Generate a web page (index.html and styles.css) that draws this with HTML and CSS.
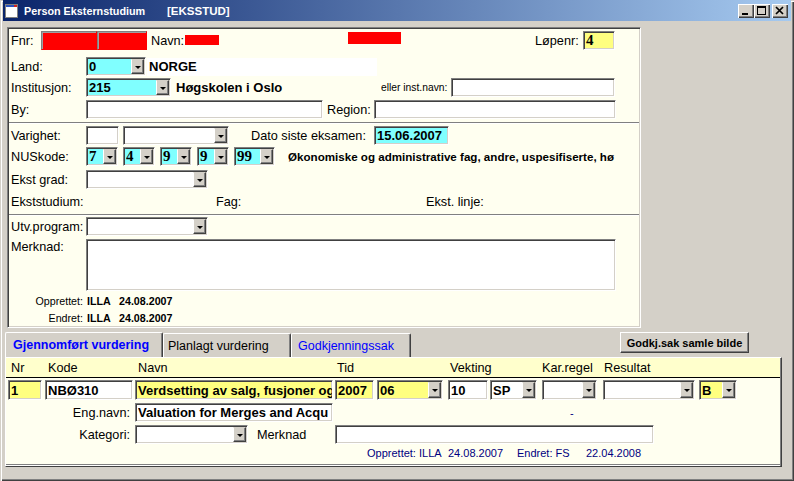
FILE: index.html
```html
<!DOCTYPE html>
<html>
<head>
<meta charset="utf-8">
<title>Person Eksternstudium</title>
<link rel="stylesheet" href="styles.css">
</head>
<body>
<div class="win">
  <div class="titlebar">
    <svg class="ticon" width="14" height="14" viewBox="0 0 14 14"><rect x="0.5" y="0.5" width="12" height="13" fill="#fff" stroke="#808080"/><rect x="1" y="1" width="11" height="2" fill="#2a52be"/><rect x="9" y="1" width="3" height="2" fill="#d02020"/></svg>
    <span class="ttext">Person Eksternstudium</span><span class="tcode">[EKSSTUD]</span>
    <div class="tbtns">
      <div class="tbtn"><svg width="16" height="14" viewBox="0 0 16 14"><rect x="4" y="9" width="6" height="2" fill="#000"/></svg></div>
      <div class="tbtn"><svg width="16" height="14" viewBox="0 0 16 14"><rect x="3.5" y="2.5" width="8" height="8" fill="none" stroke="#000"/><rect x="3" y="2" width="9" height="2" fill="#000"/></svg></div>
      <div class="tbtn close"><svg width="16" height="14" viewBox="0 0 16 14"><path d="M4 3 L11 10 M11 3 L4 10" stroke="#000" stroke-width="1.7"/></svg></div>
    </div>
  </div>

  <div class="top">
    <div class="row r1">
      <span class="lbl fnr">Fnr:</span>
      <div class="fld red w56"></div>
      <div class="fld red w50"></div>
      <span class="lbl navn">Navn:</span>
      <div class="redbar rb1"></div>
      <div class="redbar rb2"></div>
      <span class="lbl lopenr">Løpenr:</span>
      <div class="fld yel serif w32">4</div>
    </div>
    <div class="row r2">
      <span class="lbl lw">Land:</span>
      <div class="fld combo cyan w60"><span class="val">0</span><span class="dd"></span></div>
      <div class="plain w230">NORGE</div>
    </div>
    <div class="row r3">
      <span class="lbl lw">Institusjon:</span>
      <div class="fld combo cyan w85"><span class="val">215</span><span class="dd"></span></div>
      <span class="boldtxt inst">Høgskolen i Oslo</span>
      <span class="small instlbl">eller inst.navn:</span>
      <div class="fld w164"></div>
    </div>
    <div class="row r4">
      <span class="lbl lw">By:</span>
      <div class="fld w237"></div>
      <span class="lbl region">Region:</span>
      <div class="fld w242"></div>
    </div>
    <div class="divider d1"></div>
    <div class="row r5">
      <span class="lbl lw">Varighet:</span>
      <div class="fld w33"></div>
      <div class="fld combo w106 ml4"><span class="val"></span><span class="dd"></span></div>
      <span class="lbl dato">Dato siste eksamen:</span>
      <div class="fld cyan w75">15.06.2007</div>
    </div>
    <div class="row r6">
      <span class="lbl lw">NUSkode:</span>
      <div class="fld combo cyan serif w32"><span class="val">7</span><span class="dd"></span></div>
      <div class="fld combo cyan serif w32 ml5"><span class="val">4</span><span class="dd"></span></div>
      <div class="fld combo cyan serif w32 ml5"><span class="val">9</span><span class="dd"></span></div>
      <div class="fld combo cyan serif w32 ml5"><span class="val">9</span><span class="dd"></span></div>
      <div class="fld combo cyan serif w41 ml5"><span class="val">99</span><span class="dd"></span></div>
      <span class="nustxt">Økonomiske og administrative fag, andre, uspesifiserte, hø</span>
    </div>
    <div class="row r7">
      <span class="lbl lw">Ekst grad:</span>
      <div class="fld combo w122"><span class="val"></span><span class="dd"></span></div>
    </div>
    <div class="row r8">
      <span class="lbl eks">Ekststudium:</span>
      <span class="lbl fag">Fag:</span>
      <span class="lbl">Ekst. linje:</span>
    </div>
    <div class="divider d2"></div>
    <div class="row r9">
      <span class="lbl lw">Utv.program:</span>
      <div class="fld combo w122"><span class="val"></span><span class="dd"></span></div>
    </div>
    <div class="row merk">
      <span class="lbl lw mlbl">Merknad:</span>
      <div class="fld area"></div>
    </div>
    <div class="row meta m1">
      <span class="metalbl">Opprettet:</span>
      <span class="metaval who">ILLA</span>
      <span class="metaval">24.08.2007</span>
    </div>
    <div class="row meta m2">
      <span class="metalbl">Endret:</span>
      <span class="metaval who">ILLA</span>
      <span class="metaval">24.08.2007</span>
    </div>
  </div>

  <div class="tabs">
    <div class="tab sel t1">Gjennomført vurdering</div>
    <div class="tab t2">Planlagt vurdering</div>
    <div class="tab t3">Godkjenningssak</div>
    <div class="gbtn">Godkj.sak samle bilde</div>
  </div>

  <div class="grid">
    <div class="gridin">
      <div class="ghead">
        <span class="h-nr">Nr</span>
        <span class="h-kode">Kode</span>
        <span class="h-navn">Navn</span>
        <span class="h-tid">Tid</span>
        <span class="h-vekt">Vekting</span>
        <span class="h-kar">Kar.regel</span>
        <span>Resultat</span>
      </div>
      <div class="grow g1">
        <div class="fld yel w34 h20">1</div>
        <div class="fld w88 h20 ml3">NBØ310</div>
        <div class="fld yel w198 h20 ml2"><span class="clip">Verdsetting av salg, fusjoner og</span></div>
        <div class="fld yel w39 h20 ml2">2007</div>
        <div class="fld combo yel w66 h20 ml3"><span class="val">06</span><span class="dd"></span></div>
        <div class="fld w40 h20 ml5">10</div>
        <div class="fld combo w47 h20 ml2"><span class="val">SP</span><span class="dd"></span></div>
        <div class="fld combo w55 h20 ml5"><span class="val"></span><span class="dd"></span></div>
        <div class="fld combo w92 h20 ml6"><span class="val"></span><span class="dd"></span></div>
        <div class="fld combo yel w38 h20 ml4"><span class="val">B</span><span class="dd"></span></div>
      </div>
      <div class="grow g2">
        <span class="glbl">Eng.navn:</span>
        <div class="fld w198"><span class="clip">Valuation for Merges and Acqu</span></div>
        <span class="dash">-</span>
      </div>
      <div class="grow g3">
        <span class="glbl">Kategori:</span>
        <div class="fld combo w113"><span class="val"></span><span class="dd"></span></div>
        <span class="gmerk">Merknad</span>
        <div class="fld w319"></div>
      </div>
      <div class="grow g4">
        <span class="bl b1">Opprettet: ILLA</span>
        <span class="bl b2">24.08.2007</span>
        <span class="bl b3">Endret: FS</span>
        <span class="bl">22.04.2008</span>
      </div>
    </div>
  </div>
</div>
</body>
</html>
```

FILE: styles.css
```css
body {
  margin: 0;
  font-family: "Liberation Sans", Arial, sans-serif;
  font-size: 12.7px;
  color: #000;
}

.win {
  width: 794px;
  height: 481px;
  box-sizing: border-box;
  background: #D4D0C8;
  overflow: hidden;
  box-shadow: inset 1px 1px 0 #D4D0C8, inset 2px 2px 0 #fff, inset -1px -1px 0 #404040, inset -2px -2px 0 #808080;
}

/* Title bar */
.titlebar {
  height: 21px;
  margin: 0 3px;
  background: linear-gradient(to right, #0A246A, #A6CAF0);
  display: flex;
  align-items: center;
  color: #fff;
  font-size: 10.8px;
  font-weight: bold;
}
.ticon { margin-left: 2px; flex: none; }
.ttext { margin-left: 5px; width: 143px; white-space: nowrap; }
.tcode { white-space: nowrap; font-size: 11.5px; }
.tbtns { margin-left: auto; margin-right: 3px; display: flex; }
.tbtn {
  width: 16px;
  height: 14px;
  background: #D4D0C8;
  box-shadow: inset 1px 1px 0 #fff, inset -1px -1px 0 #404040, inset -2px -2px 0 #808080;
  display: flex;
}
.tbtn.close { margin-left: 2px; }

/* Top panel */
.top {
  margin: 6px 0 0 7px;
  width: 634px;
  height: 301px;
  box-sizing: border-box;
  background: #FFFFF0;
  border: 1px solid;
  border-color: #808080 #fff #fff #808080;
  box-shadow: inset 1px 1px 0 #404040, inset -1px -1px 0 #D4D0C8;
  padding: 1px;
}
.row {
  display: flex;
  align-items: center;
  height: 19px;
  padding-left: 2px;
}
.r1 { margin-top: 2px; }
.r2 { margin-top: 7px; }
.r3 { margin-top: 2px; }
.r4 { margin-top: 3px; }
.d1 { margin-top: 3px; }
.r5 { margin-top: 2px; }
.r6 { margin-top: 2px; }
.r7 { margin-top: 4px; }
.r8 { margin-top: 3px; height: 20px; }
.d2 { margin-top: 2px; }
.r9 { margin-top: 1px; }
.merk { margin-top: 3px; height: 52px; align-items: flex-start; }
.m1 { margin-top: 2px; height: 15px; }
.m2 { margin-top: 2px; height: 15px; }

.divider {
  height: 1px;
  background: #808080;
  border-bottom: 1px solid #fff;
}

.lbl { white-space: nowrap; flex: none; }
.lw { width: 75px; }
.fnr { width: 30px; }
.navn { margin-left: 4px; width: 34px; }
.lopenr { margin-left: 134px; width: 48px; }
.region { margin-left: 4px; width: 47px; }
.dato { margin-left: 22px; width: 123px; }
.eks { width: 205px; }
.fag { width: 210px; }
.mlbl { padding-top: 1px; }

.redbar { background: #ff0000; flex: none; }
.rb1 { width: 34px; height: 10px; margin-top: -2px; }
.rb2 { width: 53px; height: 12px; margin-left: 129px; margin-top: -5px; }

/* Fields */
.fld {
  box-sizing: border-box;
  height: 19px;
  flex: none;
  background: #fff;
  border: 1px solid;
  border-color: #808080 #fff #fff #808080;
  box-shadow: inset 1px 1px 0 #404040, inset -1px -1px 0 #D4D0C8;
  display: flex;
  align-items: center;
  padding-left: 2px;
  font-weight: bold;
  font-size: 13px;
  white-space: nowrap;
  overflow: hidden;
}
.clip { overflow: hidden; white-space: nowrap; flex: 1; min-width: 0; }
.h20 { height: 20px; }
.combo { padding-right: 0; }
.combo .val { flex: 1; overflow: hidden; }
.dd {
  box-sizing: border-box;
  width: 13px;
  height: calc(100% - 2px);
  margin-right: 1px;
  flex: none;
  background: #D4D0C8;
  border: 1px solid;
  border-color: #D4D0C8 #404040 #404040 #fff;
  box-shadow: inset -1px -1px 0 #808080;
  display: flex;
  align-items: center;
  justify-content: center;
}
.dd::after {
  content: "";
  width: 0;
  height: 0;
  margin-top: 1px;
  border-left: 3px solid transparent;
  border-right: 3px solid transparent;
  border-top: 3px solid #000;
}
.red { background: #ff0000; border-color: #808080 #ff0000 #ff0000 #808080; box-shadow: inset 1px 1px 0 #a0a0a0; }
.cyan { background: #80FFFF; }
.yel { background: #FFFF80; }
.serif { font-family: "Liberation Serif", "Times New Roman", serif; font-size: 15px; }
.area { width: 530px; height: 52px; }

.plain {
  height: 18px;
  margin-left: 1px;
  background: #fff;
  padding-left: 2px;
  display: flex;
  align-items: center;
  font-weight: bold;
  font-size: 13px;
  flex: none;
  box-sizing: border-box;
}
.boldtxt { font-weight: bold; font-size: 13px; white-space: nowrap; }
.inst { margin-left: 5px; width: 205px; flex: none; }
.small { font-size: 10.3px; white-space: nowrap; }
.instlbl { width: 70px; flex: none; overflow: hidden; }
.nustxt {
  margin-left: 13px;
  width: 327px;
  overflow: hidden;
  white-space: nowrap;
  font-weight: bold;
  font-size: 11.6px;
  flex: none;
}

.meta { font-size: 10.7px; }
.metalbl { width: 72px; text-align: right; flex: none; }
.metaval { font-weight: bold; white-space: nowrap; }
.who { margin-left: 4px; width: 32px; }

/* widths / spacings */
.w30 { width: 30px; } .w32 { width: 32px; } .w33 { width: 33px; } .w34 { width: 34px; }
.w38 { width: 38px; } .w39 { width: 39px; } .w40 { width: 40px; } .w41 { width: 41px; }
.w47 { width: 47px; } .w50 { width: 50px; } .w55 { width: 55px; } .w56 { width: 56px; }
.w60 { width: 60px; } .w66 { width: 66px; } .w75 { width: 75px; } .w85 { width: 85px; }
.w88 { width: 88px; } .w92 { width: 92px; } .w106 { width: 106px; } .w113 { width: 113px; }
.w122 { width: 122px; } .w164 { width: 164px; } .w198 { width: 198px; } .w230 { width: 230px; }
.w237 { width: 237px; } .w242 { width: 242px; } .w319 { width: 319px; }
.ml2 { margin-left: 2px; } .ml3 { margin-left: 3px; } .ml4 { margin-left: 4px; }
.ml5 { margin-left: 5px; } .ml6 { margin-left: 6px; }

/* Tabs */
.tabs {
  display: flex;
  align-items: flex-end;
  margin-top: 4px;
  height: 25px;
}
.tab {
  box-sizing: border-box;
  height: 24px;
  background: #D4D0C8;
  border-top: 1px solid #fff;
  border-left: 1px solid #fff;
  border-right: 1px solid #404040;
  border-radius: 2px 2px 0 0;
  box-shadow: inset -1px 0 0 #808080;
  display: flex;
  align-items: center;
  font-size: 12.5px;
  white-space: nowrap;
  flex: none;
}
.tab.sel { height: 25px; color: #0000FF; font-weight: bold; }
.t1 { margin-left: 5px; width: 158px; padding-left: 7px; }
.t2 { width: 128px; padding-left: 4px; }
.t3 { width: 120px; padding-left: 6px; color: #0000FF; }
.gbtn {
  align-self: flex-start;
  margin-left: 209px;
  width: 129px;
  height: 21px;
  box-sizing: border-box;
  background: #D4D0C8;
  border: 1px solid;
  border-color: #fff #404040 #404040 #fff;
  box-shadow: inset -1px -1px 0 #808080;
  display: flex;
  align-items: center;
  justify-content: center;
  font-weight: bold;
  font-size: 11px;
  white-space: nowrap;
}

/* Grid panel */
.grid {
  margin-left: 5px;
  width: 777px;
  box-sizing: border-box;
  border: 1px solid;
  border-color: #fff #404040 #404040 #fff;
  box-shadow: inset -1px -1px 0 #808080;
  padding-bottom: 1px;
}
.gridin {
  margin-right: 1px;
  background: #FFFFF0;
  padding-bottom: 4px;
  border-bottom: 1px solid #808080;
  box-shadow: 0 1px 0 #fff;
}
.ghead {
  height: 19px;
  background: #FFFFCC;
  border-bottom: 1px solid #000;
  display: flex;
  align-items: center;
  padding-left: 5px;
  white-space: nowrap;
}
.h-nr { width: 37px; }
.h-kode { width: 90px; }
.h-navn { width: 199px; }
.h-tid { width: 113px; }
.h-vekt { width: 92px; }
.h-kar { width: 62px; }

.grow {
  display: flex;
  align-items: center;
  padding-left: 2px;
  height: 19px;
}
.g1 { margin-top: 2px; height: 20px; }
.g2 { margin-top: 3px; }
.g3 { margin-top: 3px; }
.g4 { margin-top: 2px; height: 14px; font-size: 11px; color: #000080; padding-left: 361px; }
.glbl { width: 127px; box-sizing: border-box; padding-right: 5px; text-align: right; flex: none; }
.dash { margin-left: 237px; color: #000080; font-size: 11px; }
.gmerk { margin-left: 9px; width: 78px; flex: none; }
.bl { white-space: nowrap; flex: none; }
.b1 { width: 81px; }
.b2 { width: 69px; }
.b3 { width: 69px; }
```
